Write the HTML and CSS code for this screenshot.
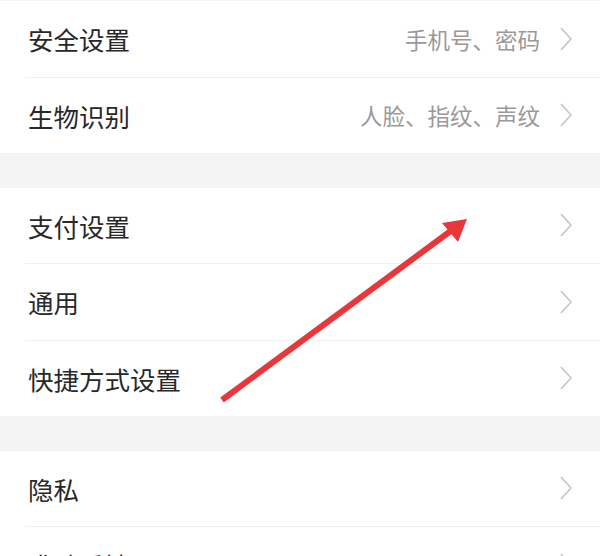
FILE: index.html
```html
<!DOCTYPE html>
<html lang="zh-CN">
<head>
    <meta charset="UTF-8">
    <meta name="viewport" content="width=device-width, initial-scale=1.0">
    <title>设置</title>
    <link rel="stylesheet" href="styles.css">
</head>
<body>

    <!-- 第一组 -->
    <div class="group group-first">
        <div class="row">
            <span class="label">安全设置</span>
            <span class="value">手机号、密码</span>
            <svg class="chevron" viewBox="0 0 12 24"><polyline points="1,1 11,12 1,23"/></svg>
        </div>
        <div class="row">
            <span class="label">生物识别</span>
            <span class="value">人脸、指纹、声纹</span>
            <svg class="chevron" viewBox="0 0 12 24"><polyline points="1,1 11,12 1,23"/></svg>
        </div>
    </div>

    <!-- 第二组 -->
    <div class="group">
        <div class="row">
            <span class="label">支付设置</span>
            <svg class="chevron" viewBox="0 0 12 24"><polyline points="1,1 11,12 1,23"/></svg>
        </div>
        <div class="row">
            <span class="label">通用</span>
            <svg class="chevron" viewBox="0 0 12 24"><polyline points="1,1 11,12 1,23"/></svg>
        </div>
        <div class="row">
            <span class="label">快捷方式设置</span>
            <svg class="chevron" viewBox="0 0 12 24"><polyline points="1,1 11,12 1,23"/></svg>
        </div>
    </div>

    <!-- 第三组 -->
    <div class="group">
        <div class="row">
            <span class="label">隐私</span>
            <svg class="chevron" viewBox="0 0 12 24"><polyline points="1,1 11,12 1,23"/></svg>
        </div>
        <div class="row">
            <span class="label">求助反馈</span>
            <svg class="chevron" viewBox="0 0 12 24"><polyline points="1,1 11,12 1,23"/></svg>
        </div>
    </div>

    <!-- 红色箭头标注 -->
    <svg class="arrow" viewBox="0 0 600 556">
        <line x1="222" y1="400" x2="452" y2="230" stroke="#e8363a" stroke-width="6"/>
        <polygon points="467,219 442,223 458,242" fill="#e8363a"/>
    </svg>

</body>
</html>
```

FILE: styles.css
```css
body { margin: 0; background: #f4f4f4; font-family: "Noto Sans CJK SC", sans-serif; overflow: hidden; height: 556px; position: relative; }
.group { background: #fff; margin-top: 34.5px; }
.group-first { margin-top: 1px; }
.row { display: flex; align-items: center; height: 75.5px; margin-left: 25px; padding-right: 28px; border-bottom: 1px solid #f0f0f0; }
.row:last-child { border-bottom: none; }
.label { flex: 1; font-size: 25.5px; color: #282828; padding-left: 3px; }
.value { font-size: 22.5px; color: #999; margin-right: 20px; }
.chevron { width: 12px; height: 24px; fill: none; stroke: #c4c4c4; stroke-width: 1.6; }
.arrow { position: absolute; left: 0; top: 0; width: 600px; height: 556px; }
```
